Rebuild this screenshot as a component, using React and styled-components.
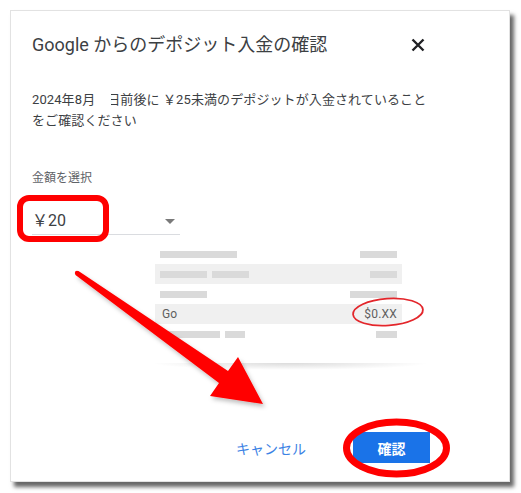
import styled, { createGlobalStyle } from "styled-components"

const GlobalStyle = createGlobalStyle`
    html, body {
        margin: 0;
        padding: 0;
        background: #ffffff;
    }
    body {
        font-family: "Roboto", "Noto Sans CJK JP", sans-serif;
    }
`

const receiptRows = [
    { shaded: false, left: [77], right: 37 },
    { shaded: true, left: [47, 37], right: 27 },
    { shaded: false, left: [47], right: 47 },
    { shaded: true, text: "Go", amount: "$0.XX" },
    { shaded: false, left: [60, 20], right: 21 },
]

function App() {
    return (
        <>
        <GlobalStyle/>
        <Page>
            <Dialog>
                <TitleRow>
                    <Title>Google からのデポジット入金の確認</Title>
                    <CloseButton aria-label="閉じる">
                        <svg width="14" height="14" viewBox="0 0 14 14">
                            <path d="M1.5 1.5 L12.5 12.5 M12.5 1.5 L1.5 12.5" stroke="#202124" strokeWidth="2.4" fill="none"/>
                        </svg>
                    </CloseButton>
                </TitleRow>

                <Message>
                    2024年8月<Masked>日</Masked>前後に ￥25未満のデポジットが入金されていること<br/>
                    をご確認ください
                </Message>

                <Label>金額を選択</Label>
                <Select>
                    <SelectValue>￥20</SelectValue>
                    <Caret/>
                </Select>

                <Receipt>
                    {receiptRows.map((row, i) => (
                        <ReceiptRow key={i} $shaded={row.shaded}>
                            {row.text ? (
                                <>
                                    <RowText $pad={2}>{row.text}</RowText>
                                    <RowText>{row.amount}</RowText>
                                </>
                            ) : (
                                <>
                                    <BarGroup>
                                        {row.left.map((w, j) => <Bar key={j} style={{ width: w }}/>)}
                                    </BarGroup>
                                    <Bar style={{ width: row.right }}/>
                                </>
                            )}
                        </ReceiptRow>
                    ))}
                </Receipt>
                <ReceiptShadow/>

                <Actions>
                    <TextButton>キャンセル</TextButton>
                    <PrimaryButton>確認</PrimaryButton>
                </Actions>
            </Dialog>

            {/* 注釈 (赤い枠と矢印) */}
            <Annotations width="521" height="493" viewBox="0 0 521 493">
                <defs>
                    <filter id="arrowShadow" x="-20%" y="-20%" width="140%" height="140%">
                        <feDropShadow dx="2" dy="3" stdDeviation="2" floodColor="#000" floodOpacity="0.25"/>
                    </filter>
                </defs>
                <rect x="20" y="198" width="86" height="41" rx="9" fill="none" stroke="#ff0000" strokeWidth="6"/>
                <ellipse cx="388" cy="312" rx="35" ry="13.5" fill="none" stroke="#e3262b" strokeWidth="1.8" transform="rotate(-4 388 312)"/>
                <polygon
                    points="78.5,271 228,371 238,357 263,404 210,396 219,383 75.5,275"
                    fill="#ff0000"
                    filter="url(#arrowShadow)"
                />
                <circle cx="77" cy="273" r="2.2" fill="#ff0000"/>
                <ellipse cx="396.5" cy="448" rx="50" ry="26" fill="none" stroke="#ff0000" strokeWidth="7"/>
            </Annotations>
        </Page>
        </>
    )
}

const Page = styled.div`
    position: relative;
    width: 521px;
    height: 493px;
    padding: 10px;
    box-sizing: border-box;
`

const Dialog = styled.div`
    width: 500px;
    height: 472px;
    box-sizing: border-box;
    padding: 20px 79px 18px 21px;
    background: #ffffff;
    border: 1px solid #e2e2e2;
    box-shadow: 4px 5px 4px rgba(0, 0, 0, 0.6);
    display: flex;
    flex-direction: column;
`

const TitleRow = styled.div`
    height: 28px;
    display: flex;
    align-items: center;
    justify-content: space-between;
`

const Title = styled.h2`
    margin: 0;
    font-size: 18px;
    font-weight: 400;
    line-height: 28px;
    color: #3c4043;
    white-space: nowrap;
`

const CloseButton = styled.button`
    width: 24px;
    height: 24px;
    padding: 0;
    border: none;
    background: none;
    display: flex;
    align-items: center;
    justify-content: center;
`

const Message = styled.p`
    margin: 30px 0 0;
    font-size: 13px;
    line-height: 21px;
    letter-spacing: 0.1px;
    color: #3c4043;
    white-space: nowrap;
`

// 日付の一部が白い帯で隠れている
const Masked = styled.span`
    position: relative;
    margin-left: 12px;

    &::before {
        content: "";
        position: absolute;
        left: -1px;
        top: 0;
        width: 5px;
        height: 100%;
        background: #ffffff;
    }
`

const Label = styled.div`
    margin-top: 39px;
    font-size: 12px;
    line-height: 16px;
    color: #5f6368;
`

const Select = styled.div`
    margin-top: 12px;
    width: 148px;
    height: 37px;
    box-sizing: border-box;
    padding: 13px 5px 0 0;
    border-bottom: 1px solid #dadce0;
    display: flex;
    align-items: flex-start;
    justify-content: space-between;
`

const SelectValue = styled.span`
    font-size: 16px;
    line-height: 20px;
    color: #3c4043;
`

const Caret = styled.span`
    margin-top: 8px;
    width: 0;
    height: 0;
    border-left: 5px solid transparent;
    border-right: 5px solid transparent;
    border-top: 5px solid #7a7a7a;
`

const Receipt = styled.div`
    margin: 9px 0 0 123px;
    width: 247px;
`

const ReceiptRow = styled.div`
    height: 20px;
    box-sizing: border-box;
    padding: 0 5px;
    display: flex;
    align-items: center;
    justify-content: space-between;
    background: ${(p) => (p.$shaded ? "#f0f0f0" : "transparent")};
`

const BarGroup = styled.div`
    display: flex;
    gap: 5px;
`

const Bar = styled.span`
    display: block;
    height: 7px;
    background: #dadada;
`

const RowText = styled.span`
    padding-left: ${(p) => p.$pad || 0}px;
    font-size: 12px;
    color: #5f5f5f;
    letter-spacing: 0.2px;
`

const ReceiptShadow = styled.div`
    margin: 19px 0 0 118px;
    width: 280px;
    height: 7px;
    background: radial-gradient(ellipse at 50% 0%, rgba(0, 0, 0, 0.14) 0%, rgba(0, 0, 0, 0.05) 45%, rgba(0, 0, 0, 0) 70%);
`

const Actions = styled.div`
    margin-top: auto;
    display: flex;
    justify-content: flex-end;
    align-items: center;
    gap: 34px;
`

const TextButton = styled.button`
    height: 31px;
    padding: 0 13px;
    border: none;
    background: none;
    font-family: "Roboto", "Noto Sans CJK JP", sans-serif;
    font-size: 14px;
    color: #3b82e4;
`

const PrimaryButton = styled.button`
    width: 77px;
    height: 31px;
    padding: 0;
    border: none;
    background: #1a73e8;
    font-family: "Roboto", "Noto Sans CJK JP", sans-serif;
    font-size: 14px;
    font-weight: 700;
    color: #ffffff;
`

const Annotations = styled.svg`
    position: absolute;
    left: 0;
    top: 0;
    pointer-events: none;
    overflow: visible;
`

export default App
